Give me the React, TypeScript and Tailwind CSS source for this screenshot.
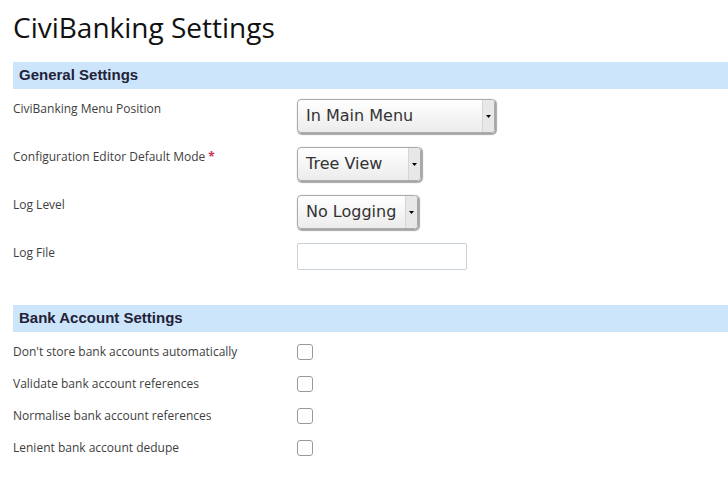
import React from 'react';

const labelCls = "text-[12px] leading-4 text-[#3e3e3e] font-['Open_Sans',sans-serif]";

const Select: React.FC<{ value: string; width: string }> = ({ value, width }) => (
  <div
    className={`${width} h-[34px] flex items-stretch rounded-[4px] border border-[#aaa] bg-gradient-to-b from-white to-[#ececec] shadow-[1px_1px_1px_1px_rgba(0,0,0,0.35)] overflow-hidden`}
  >
    <span className="flex-1 pl-2 flex items-center text-[16px] text-[#333] font-['DejaVu_Sans',sans-serif] whitespace-nowrap">
      {value}
    </span>
    <span className="w-3 flex items-center justify-center bg-[#e8e8e8] border-l border-[#d6d6d6]">
      <svg width="5" height="3" viewBox="0 0 5 3">
        <path d="M0 0h5L2.5 3z" fill="#000" />
      </svg>
    </span>
  </div>
);

const Header: React.FC<{ title: string }> = ({ title }) => (
  <div className="h-[27px] flex items-center pl-[6px] bg-[#cde5fb]">
    <h3 className="text-[15px] font-bold text-[#222238] font-['Liberation_Sans',Arial,sans-serif]">{title}</h3>
  </div>
);

const FieldRow: React.FC<{ label: React.ReactNode; children: React.ReactNode }> = ({ label, children }) => (
  <div className="h-12 flex items-start pt-1">
    <div className={`w-[284px] mt-[2px] ${labelCls}`}>{label}</div>
    {children}
  </div>
);

const CheckRow: React.FC<{ label: string }> = ({ label }) => (
  <div className="h-8 flex items-center">
    <div className={`w-[284px] ${labelCls}`}>{label}</div>
    <span className="w-4 h-4 rounded-[3px] border border-[#999] bg-white" />
  </div>
);

export default function App() {
  return (
    <div className="w-[728px] h-[492px] bg-white overflow-hidden pl-[13px]">
      <h1 className="pt-2 text-[28px] leading-[38px] text-[#111] font-['Open_Sans',sans-serif]">
        CiviBanking Settings
      </h1>

      <div className="mt-4">
        <Header title="General Settings" />
      </div>

      <div className="mt-[6px]">
        <FieldRow label="CiviBanking Menu Position">
          <Select value="In Main Menu" width="w-[198px]" />
        </FieldRow>
        <FieldRow
          label={
            <>
              Configuration Editor Default Mode <span className="text-[#cf3458] font-bold">*</span>
            </>
          }
        >
          <Select value="Tree View" width="w-[124px]" />
        </FieldRow>
        <FieldRow label="Log Level">
          <Select value="No Logging" width="w-[121px]" />
        </FieldRow>
        <FieldRow label="Log File">
          <input
            type="text"
            className="w-[170px] h-[27px] rounded-[2px] border border-[#c9d1d9] bg-white outline-none"
          />
        </FieldRow>
      </div>

      <div className="mt-[18px]">
        <Header title="Bank Account Settings" />
      </div>

      <div className="mt-1">
        <CheckRow label="Don't store bank accounts automatically" />
        <CheckRow label="Validate bank account references" />
        <CheckRow label="Normalise bank account references" />
        <CheckRow label="Lenient bank account dedupe" />
      </div>
    </div>
  );
}
